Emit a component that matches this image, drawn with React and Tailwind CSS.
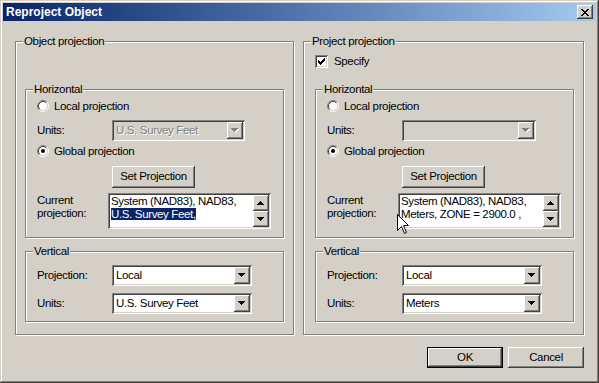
import React from "react";

const raised =
  "shadow-[inset_-1px_-1px_#404040,inset_1px_1px_#ffffff,inset_-2px_-2px_#808080,inset_2px_2px_#d4d0c8]";
const sunken =
  "shadow-[inset_1px_1px_#808080,inset_-1px_-1px_#ffffff,inset_2px_2px_#404040,inset_-2px_-2px_#d4d0c8]";

const DOWN = "M0 0h7v1H0z M1 1h5v1H1z M2 2h3v1H2z M3 3h1v1H3z";
const UP = "M3 0h1v1H3z M2 1h3v1H2z M1 2h5v1H1z M0 3h7v1H0z";

function Arrow({ d, disabled }) {
  return (
    <svg width="8" height="5" viewBox="0 0 8 5" shapeRendering="crispEdges">
      {disabled ? (
        <>
          <path d={d} fill="#ffffff" transform="translate(1 1)" />
          <path d={d} fill="#808080" />
        </>
      ) : (
        <path d={d} fill="#000000" />
      )}
    </svg>
  );
}

function Group({ label, className, children }) {
  return (
    <div
      className={`flex flex-col border border-[#808080] shadow-[inset_1px_1px_#ffffff,1px_1px_#ffffff] ${className}`}
    >
      <div className="-mt-[8px] ml-[7px] self-start bg-[#d4d0c8] px-[1px] leading-[14px]">{label}</div>
      {children}
    </div>
  );
}

function RadioIcon({ checked }) {
  return (
    <svg width="12" height="12" viewBox="0 0 12 12" className="shrink-0">
      <circle cx="6" cy="6" r="4.5" fill="#ffffff" />
      <path d="M2.1 9.9 A5.5 5.5 0 0 1 9.9 2.1" fill="none" stroke="#808080" />
      <path d="M9.9 2.1 A5.5 5.5 0 0 1 2.1 9.9" fill="none" stroke="#ffffff" />
      <path d="M2.82 9.18 A4.5 4.5 0 0 1 9.18 2.82" fill="none" stroke="#404040" />
      <path d="M9.18 2.82 A4.5 4.5 0 0 1 2.82 9.18" fill="none" stroke="#d4d0c8" />
      {checked && <circle cx="6" cy="6" r="2" fill="#000000" />}
    </svg>
  );
}

function Radio({ checked, label }) {
  return (
    <div className="mt-[2px] flex h-[16px] items-center gap-[5px] leading-[14px]">
      <RadioIcon checked={checked} />
      <span>{label}</span>
    </div>
  );
}

function Combo({ value, className, disabled }) {
  return (
    <div
      className={`flex h-[21px] p-[2px] ${sunken} ${disabled ? "bg-[#d4d0c8]" : "bg-white"} ${className}`}
    >
      <div
        className={`flex-1 overflow-hidden whitespace-nowrap pl-[2px] leading-[17px] ${
          disabled ? "text-[#808080] [text-shadow:1px_1px_#ffffff]" : "text-black"
        }`}
      >
        {value}
      </div>
      <div className={`flex h-[17px] w-[16px] items-center justify-center bg-[#d4d0c8] ${raised}`}>
        <Arrow d={DOWN} disabled={disabled} />
      </div>
    </div>
  );
}

function WinButton({ children, className }) {
  return (
    <div className={`flex items-center justify-center bg-[#d4d0c8] ${raised} ${className}`}>{children}</div>
  );
}

function ScrollBtn({ d }) {
  return (
    <div className={`flex h-[16px] w-[16px] items-center justify-center bg-[#d4d0c8] ${raised}`}>
      <Arrow d={d} />
    </div>
  );
}

function TextBox({ className, children }) {
  return (
    <div className={`flex h-[36px] bg-white p-[2px] ${sunken} ${className}`}>
      <div className="flex-1 overflow-hidden whitespace-nowrap pl-[1px] leading-[13px]">{children}</div>
      <div className="flex w-[16px] flex-col">
        <ScrollBtn d={UP} />
        <ScrollBtn d={DOWN} />
      </div>
    </div>
  );
}

function Horizontal({ units, unitsClass, text }) {
  return (
    <Group label="Horizontal" className="h-[149px] w-[259px]">
      <div className="flex flex-col pl-[11px]">
        <Radio label="Local projection" />
        <div className="mt-[6px] flex h-[21px] items-center">
          <span className="w-[75px]">Units:</span>
          <Combo className={unitsClass} disabled value={units} />
        </div>
        <Radio checked label="Global projection" />
        <WinButton className="ml-[75px] mt-[7px] h-[22px] w-[83px]">Set Projection</WinButton>
        <div className="mt-[5px] flex">
          <div className="w-[71px] pt-[1px] leading-[13px]">
            Current
            <br />
            projection:
          </div>
          <TextBox className="w-[163px]">{text}</TextBox>
        </div>
      </div>
    </Group>
  );
}

function Vertical({ units }) {
  return (
    <Group label="Vertical" className="mt-[13px] h-[71px] w-[259px]">
      <div className="flex flex-col pl-[11px]">
        <div className="mt-[7px] flex h-[21px] items-center">
          <span className="w-[75px]">Projection:</span>
          <Combo className="w-[140px]" value="Local" />
        </div>
        <div className="mt-[7px] flex h-[21px] items-center">
          <span className="w-[75px]">Units:</span>
          <Combo className="w-[140px]" value={units} />
        </div>
      </div>
    </Group>
  );
}

export default function App() {
  return (
    <div className="relative flex h-[383px] w-[599px] flex-col bg-[#d4d0c8] p-[3px] font-['Liberation_Sans',Arial,sans-serif] text-[11.5px] tracking-[-0.35px] text-black shadow-[inset_-1px_-1px_#404040,inset_1px_1px_#d4d0c8,inset_-2px_-2px_#808080,inset_2px_2px_#ffffff]">
      {/* Title bar */}
      <div className="flex h-[18px] shrink-0 items-center justify-between bg-linear-to-r from-[#0a246a] to-[#a6caf0] pl-[3px] pr-[3px]">
        <span className="text-[12px] font-bold leading-[14px] tracking-normal text-white">Reproject Object</span>
        <div className={`flex h-[14px] w-[16px] items-center justify-center bg-[#d4d0c8] ${raised}`}>
          <svg width="8" height="7" viewBox="0 0 8 7" shapeRendering="crispEdges">
            <path
              d="M0 0h2v1H0z M6 0h2v1H6z M1 1h2v1H1z M5 1h2v1H5z M2 2h4v1H2z M3 3h2v1H3z M2 4h4v1H2z M1 5h2v1H1z M5 5h2v1H5z M0 6h2v1H0z M6 6h2v1H6z"
              fill="#000000"
            />
          </svg>
        </div>
      </div>

      {/* Groups */}
      <div className="mt-[20px] flex gap-[9px] pl-[12px]">
        <Group label="Object projection" className="h-[294px] w-[279px]">
          <div className="h-[41px]" />
          <div className="ml-[9px] flex flex-col">
            <Horizontal
              units="U.S. Survey Feet"
              unitsClass="w-[133px]"
              text={
                <>
                  <div>System (NAD83), NAD83,</div>
                  <div>
                    <span className="bg-[#0a246a] text-white">U.S. Survey Feet,</span>
                  </div>
                </>
              }
            />
            <Vertical units="U.S. Survey Feet" />
          </div>
        </Group>

        <Group label="Project projection" className="h-[294px] w-[281px]">
          <div className="ml-[11px] mt-[5px] flex h-[16px] items-center gap-[6px]">
            <div className={`flex h-[13px] w-[13px] items-center justify-center bg-white ${sunken}`}>
              <svg width="7" height="7" viewBox="0 0 7 7" shapeRendering="crispEdges">
                <path
                  d="M6 0h1v1H6z M5 1h2v1H5z M0 2h1v1H0z M4 2h3v1H4z M0 3h2v1H0z M3 3h3v1H3z M0 4h5v1H0z M1 5h3v1H1z M2 6h1v1H2z"
                  fill="#000000"
                />
              </svg>
            </div>
            <span className="leading-[14px]">Specify</span>
          </div>
          <div className="h-[20px]" />
          <div className="ml-[11px] flex flex-col">
            <Horizontal
              units=""
              unitsClass="w-[134px]"
              text={
                <>
                  <div>System (NAD83), NAD83,</div>
                  <div>Meters, ZONE = 2900.0 ,</div>
                </>
              }
            />
            <Vertical units="Meters" />
          </div>
        </Group>
      </div>

      {/* Buttons */}
      <div className="mt-[12px] flex justify-end gap-[5px] pr-[12px]">
        <div className="h-[21px] w-[76px] border border-black">
          <WinButton className="h-full w-full">OK</WinButton>
        </div>
        <WinButton className="h-[21px] w-[76px]">Cancel</WinButton>
      </div>

      {/* Mouse cursor */}
      <svg
        className="absolute left-[397px] top-[214px]"
        width="13"
        height="21"
        viewBox="0 0 13 21"
      >
        <path
          d="M0.5 0.5 L0.5 16.5 L4.5 12.5 L7.5 19.5 L9.5 18.5 L6.5 11.5 L11.5 11.5 Z"
          fill="#ffffff"
          stroke="#000000"
          strokeWidth="1"
          strokeLinejoin="miter"
        />
      </svg>
    </div>
  );
}
